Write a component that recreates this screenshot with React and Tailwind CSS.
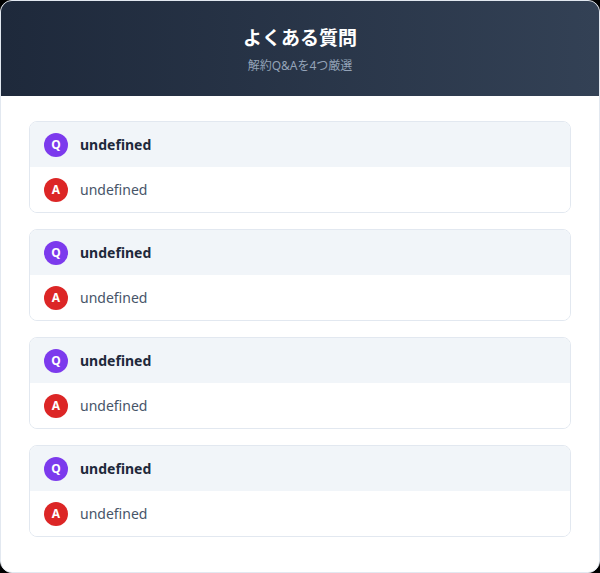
import React from "react";

const faqs = [
  { q: undefined, a: undefined },
  { q: undefined, a: undefined },
  { q: undefined, a: undefined },
  { q: undefined, a: undefined },
];

const Badge = ({ letter, color }) => (
  <span
    className={`flex h-6 w-6 shrink-0 items-center justify-center rounded-full text-[12px] font-bold text-white ${color}`}
  >
    {letter}
  </span>
);

export default function App() {
  return (
    <div
      className="h-[573px] w-[600px] bg-black"
      style={{ fontFamily: '"Noto Sans", "Noto Sans CJK JP", sans-serif' }}
    >
      <div className="flex h-full flex-col overflow-hidden rounded-xl border border-[#e2e8f0] bg-white">
        <div className="flex h-[95px] shrink-0 flex-col items-center bg-gradient-to-r from-[#1e293b] to-[#334155] pt-[22px]">
          <h1 className="text-[19px] font-bold leading-[30px] text-white">よくある質問</h1>
          <p className="mt-[3px] text-[12px] leading-5 text-[#94a3b8]">解約Q&Aを4つ厳選</p>
        </div>
        <div className="flex flex-col gap-4 px-[28px] pt-[25px]">
          {faqs.map((f, i) => (
            <div key={i} className="overflow-hidden rounded-lg border border-[#e2e8f0]">
              <div className="flex h-[45px] items-center gap-3 bg-[#f1f5f9] px-[14px]">
                <Badge letter="Q" color="bg-[#7c3aed]" />
                <span className="text-[14px] font-bold text-[#1e293b]">{String(f.q)}</span>
              </div>
              <div className="flex h-[45px] items-center gap-3 bg-white px-[14px]">
                <Badge letter="A" color="bg-[#dc2626]" />
                <span className="text-[14px] text-[#475569]">{String(f.a)}</span>
              </div>
            </div>
          ))}
        </div>
      </div>
    </div>
  );
}
